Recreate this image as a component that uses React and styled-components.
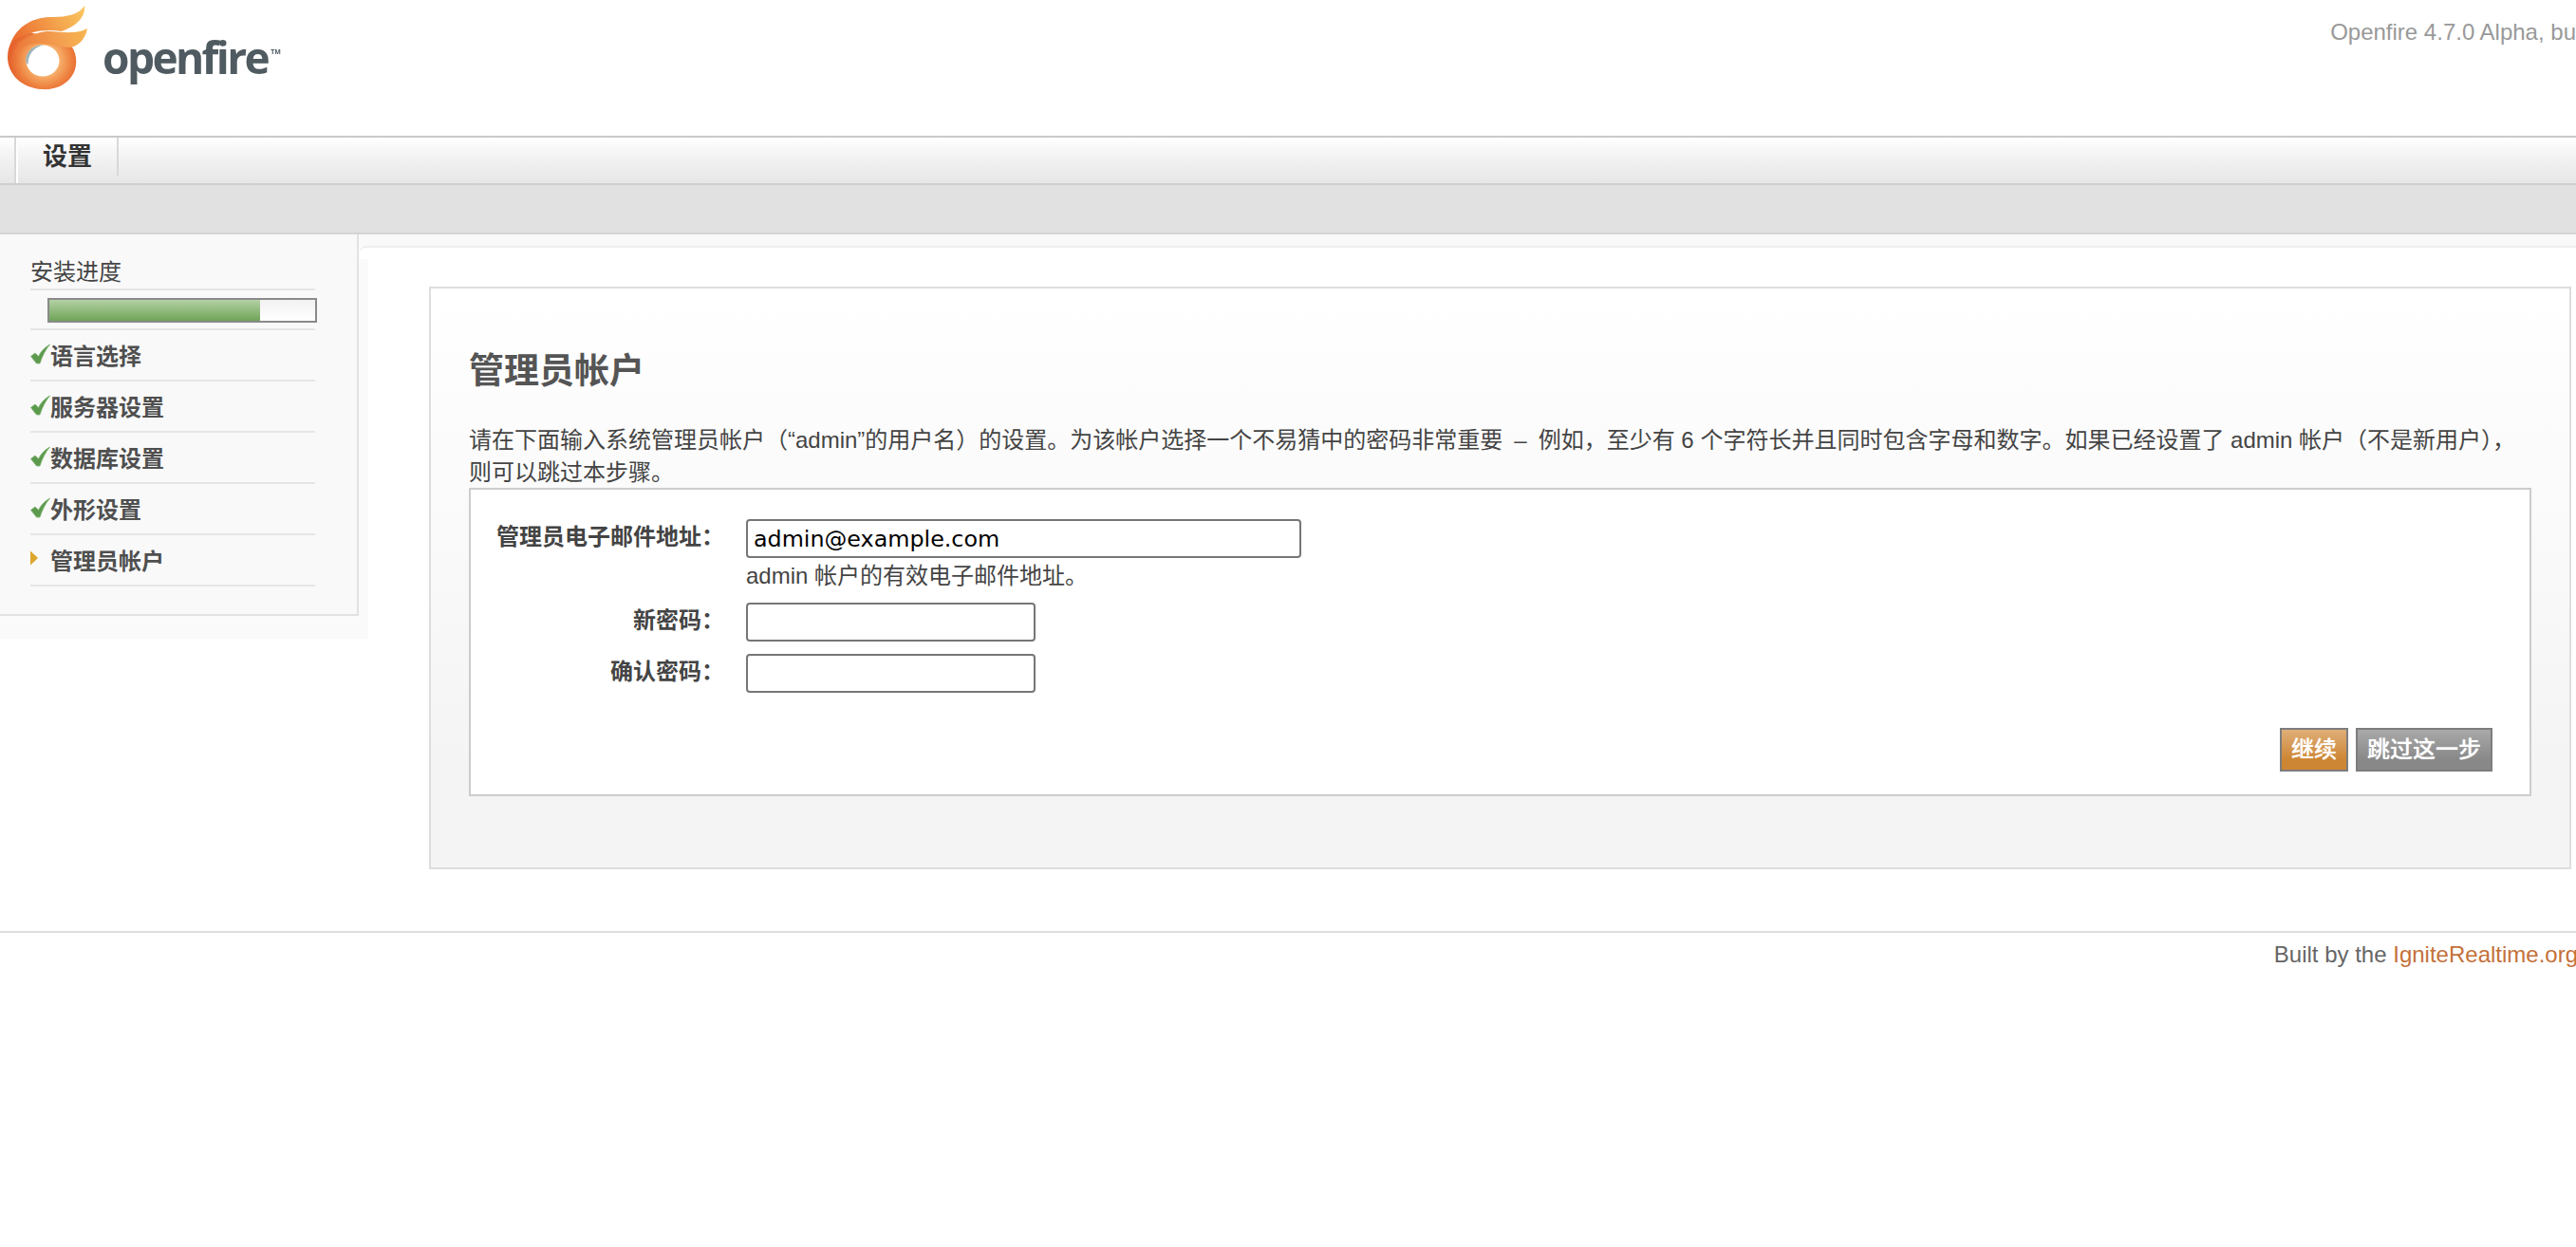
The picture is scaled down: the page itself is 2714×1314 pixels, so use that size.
import React from "react";
import styled, { createGlobalStyle } from "styled-components";

const steps = ["语言选择", "服务器设置", "数据库设置", "外形设置"];

const App = () => {
  return (
    <Page>
      <GlobalStyle />
      <Header>
        <Logo>
          <Flame />
          <Wordmark>
            openfire<Tm>TM</Tm>
          </Wordmark>
        </Logo>
        <Version>Openfire 4.7.0 Alpha, bu</Version>
      </Header>
      <Nav>
        <Tab>设置</Tab>
      </Nav>
      <SubNav />
      <Body>
        <Sidebar>
          <SideTitle>安装进度</SideTitle>
          <ProgressRow>
            <Progress>
              <ProgressFill style={{ width: `${(222 / 280) * 100}%` }} />
            </Progress>
          </ProgressRow>
          {steps.map(step => (
            <Step key={step}>
              <Check />
              {step}
            </Step>
          ))}
          <Step>
            <Arrow />
            管理员帐户
          </Step>
        </Sidebar>
        <Main>
          <Box>
            <Title>管理员帐户</Title>
            <Intro>
              请在下面输入系统管理员帐户（“admin”的用户名）的设置。为该帐户选择一个不易猜中的密码非常重要 <Dash>–</Dash> 例如，至少有 6
              个字符长并且同时包含字母和数字。如果已经设置了 admin 帐户（不是新用户），则可以跳过本步骤。
            </Intro>
            <FormBox>
              <FormRow>
                <Label>管理员电子邮件地址：</Label>
                <div>
                  <Input $wide defaultValue="admin@example.com" />
                  <Help>admin 帐户的有效电子邮件地址。</Help>
                </div>
              </FormRow>
              <FormRow>
                <Label>新密码：</Label>
                <Input type="password" />
              </FormRow>
              <FormRow>
                <Label>确认密码：</Label>
                <Input type="password" />
              </FormRow>
              <Buttons>
                <Button $primary>继续</Button>
                <Button>跳过这一步</Button>
              </Buttons>
            </FormBox>
          </Box>
        </Main>
      </Body>
      <Footer>
        Built by the <FooterLink>IgniteRealtime.org</FooterLink>
      </Footer>
    </Page>
  );
};

const Flame = () => (
  <FlameSvg viewBox="0 0 100 100" width="100" height="100">
    <defs>
      <radialGradient id="ring" gradientUnits="userSpaceOnUse" cx="47" cy="64" r="37">
        <stop offset="0.45" stopColor="#f6ad68" />
        <stop offset="0.75" stopColor="#ee8240" />
        <stop offset="1" stopColor="#e5622c" />
      </radialGradient>
      <linearGradient id="tip" gradientUnits="userSpaceOnUse" x1="15" y1="45" x2="89" y2="8">
        <stop offset="0" stopColor="#ea6a2e" />
        <stop offset="0.5" stopColor="#f29a48" />
        <stop offset="1" stopColor="#f9c860" />
      </linearGradient>
      <linearGradient id="tip2" gradientUnits="userSpaceOnUse" x1="18" y1="50" x2="92" y2="30">
        <stop offset="0" stopColor="#ec7a3a" />
        <stop offset="0.6" stopColor="#f3a050" />
        <stop offset="1" stopColor="#f7b650" />
      </linearGradient>
    </defs>
    <path
      d="M8 60 C8 46 16 36 26 32 L75 48 C82 58 82 72 75 81 C68 91 56 95 44 94 C24 93 8 79 8 60 Z"
      fill="url(#ring)"
    />
    <path
      d="M11 46 C18 26 38 17 56 18 C70 18 84 15 89 6 C90 16 84 26 65 33 C45 30 24 34 11 46 Z"
      fill="url(#tip)"
    />
    <path
      d="M14 58 C20 42 36 33 52 33 C66 34 82 36 92 30 C90 41 84 47 75 50 C62 50 50 45 38 46 C28 47 20 50 14 58 Z"
      fill="url(#tip2)"
    />
    <ellipse cx="45" cy="64" rx="17.5" ry="16.5" fill="#fff" />
    <path d="M27.5 66 C26 55 35 47 46 47.4 C38 49 29.5 55 29.5 68 Z" fill="#9db4b8" />
  </FlameSvg>
);

const Check = () => (
  <StepIcon viewBox="0 0 21 22" width="21" height="22">
    <path
      d="M0.5 13.5 L5 10 L8.5 13.5 C11 8.5 15 4 20.5 1 C16 6.5 12.5 13 10 21 L6.5 21 Z"
      fill="#5c9a4e"
      stroke="#7cb26e"
      strokeWidth="0.8"
      strokeLinejoin="round"
    />
  </StepIcon>
);

const Arrow = () => (
  <StepIcon viewBox="0 0 21 22" width="21" height="22">
    <path d="M0 2.5 L8 10 L0 17.5 Z" fill="#dca62c" />
  </StepIcon>
);

const GlobalStyle = createGlobalStyle`
  html, body {
    margin: 0;
    padding: 0;
    background: #fff;
  }
  body {
    font-family: "Liberation Sans", "Noto Sans CJK SC", sans-serif;
  }
`;

const Page = styled.div`
  width: 2714px;
  min-height: 1314px;
  overflow: hidden;
  color: #444;
  font-size: 24px;
`;

const Header = styled.div`
  height: 143px;
  display: flex;
  justify-content: space-between;
  align-items: flex-start;
`;

const Logo = styled.div`
  display: flex;
  align-items: flex-start;
`;

const FlameSvg = styled.svg`
  display: block;
  filter: blur(0.5px);
`;

const Wordmark = styled.div`
  font-family: "Open Sans", sans-serif;
  font-weight: 700;
  font-size: 46px;
  line-height: 60px;
  letter-spacing: -2.6px;
  color: #4f5b60;
  margin: 30px 0 0 8px;
  display: flex;
  filter: blur(0.5px);
`;

const Tm = styled.span`
  font-size: 7px;
  line-height: 10px;
  margin: 20px 0 0 3px;
  letter-spacing: 0;
  font-weight: 700;
`;

const Version = styled.div`
  color: #999;
  line-height: 28px;
  margin-top: 20px;
  white-space: nowrap;
`;

const Nav = styled.div`
  height: 52px;
  box-sizing: border-box;
  border-top: 2px solid #c9c9c9;
  border-bottom: 2px solid #cfcfcf;
  background: linear-gradient(#fff, #f6f6f6 30%, #e6e6e6);
  padding-left: 15px;
  display: flex;
  align-items: flex-start;
`;

const Tab = styled.div`
  position: relative;
  width: 110px;
  height: 48px;
  box-sizing: border-box;
  text-align: center;
  font-size: 26px;
  font-weight: 700;
  line-height: 41px;
  color: #333;
  border-left: 2px solid #d8d8d8;
  box-shadow: 2px 0 0 #fff inset;

  &::after {
    content: "";
    position: absolute;
    top: 0;
    right: 0;
    width: 2px;
    height: 40px;
    background: #d8d8d8;
  }
`;

const SubNav = styled.div`
  height: 52px;
  box-sizing: border-box;
  background: #e1e1e1;
  border-bottom: 2px solid #d4d4d4;
`;

const Body = styled.div`
  display: flex;
  align-items: flex-start;
  background: linear-gradient(#f9f9f9 13px, #fff 13px);
`;

const Sidebar = styled.div`
  width: 378px;
  height: 402px;
  box-sizing: border-box;
  flex-shrink: 0;
  padding: 0 44px 0 32px;
  background: #f9f9f9;
  border-right: 2px solid #e2e2e2;
  border-bottom: 2px solid #e2e2e2;
  box-shadow: 10px 24px 0 #fafafa, 0 24px 0 #fafafa;
`;

const SideTitle = styled.div`
  height: 59px;
  box-sizing: border-box;
  padding-top: 22px;
  line-height: 36px;
  border-bottom: 2px solid #e6e6e6;
  color: #444;
`;

const ProgressRow = styled.div`
  height: 42px;
  box-sizing: border-box;
  padding: 8px 0 0 18px;
  border-bottom: 2px solid #e6e6e6;
`;

const Progress = styled.div`
  width: 284px;
  height: 26px;
  box-sizing: border-box;
  border: 2px solid #8a8a8a;
  background: linear-gradient(#f2f2f2, #fff);
`;

const ProgressFill = styled.div`
  height: 100%;
  background: linear-gradient(#b4d1a4, #6fa458);
`;

const Step = styled.div`
  height: 54px;
  box-sizing: border-box;
  display: flex;
  align-items: center;
  padding-bottom: 2px;
  font-weight: 700;
  color: #4f4f4f;
  border-bottom: 2px solid #e6e6e6;
`;

const StepIcon = styled.svg`
  flex-shrink: 0;
  filter: blur(0.4px);
`;

const Main = styled.div`
  flex: 1;
  min-width: 0;
  margin-top: 12px;
  padding: 41px 5px 0 74px;
  border-top: 2px solid #eee;
  border-top-left-radius: 8px;
  background: linear-gradient(#fff 12px, transparent 12px);
`;

const Box = styled.div`
  box-sizing: border-box;
  height: 614px;
  padding: 0 40px;
  border: 2px solid #ddd;
  background: linear-gradient(#fff, #f4f4f4 85%);
`;

const Title = styled.h1`
  margin: 0;
  padding-top: 63px;
  font-size: 37px;
  line-height: 50px;
  font-weight: 700;
  color: #555;
`;

const Intro = styled.p`
  margin: 0;
  padding-top: 30px;
  line-height: 33.5px;
  color: #444;
`;

const Dash = styled.span`
  display: inline-block;
  width: 24px;
  text-align: center;
`;

const FormBox = styled.div`
  box-sizing: border-box;
  height: 325px;
  padding: 31px 39px 0 0;
  background: #fff;
  border: 2px solid #ccc;
`;

const FormRow = styled.div`
  display: grid;
  grid-template-columns: 267px auto;
  column-gap: 23px;
  justify-content: start;
  align-items: start;
  margin-bottom: 13px;
`;

const Label = styled.div`
  text-align: right;
  font-weight: 700;
  line-height: 37px;
  color: #444;
`;

const Input = styled.input`
  display: block;
  box-sizing: border-box;
  width: ${p => (p.$wide ? "585px" : "305px")};
  height: 41px;
  padding: 0 6px;
  margin: 0;
  border: 2px solid #767676;
  border-radius: 4px;
  background: #fff;
  color: #000;
  font-family: "DejaVu Sans", sans-serif;
  font-size: 23.8px;
`;

const Help = styled.div`
  line-height: 38px;
  margin-bottom: -4px;
  color: #444;
`;

const Buttons = styled.div`
  display: flex;
  justify-content: flex-end;
  gap: 8px;
  margin-top: 37px;
`;

const Button = styled.div`
  height: 46px;
  box-sizing: border-box;
  padding: 0 10px;
  line-height: 42px;
  color: #fff;
  font-weight: 500;
  text-shadow: 0 0 1px rgba(255, 255, 255, 0.7);
  border: 2px solid #7d7d7d;
  background: ${p =>
    p.$primary
      ? "linear-gradient(#dfae78, #cd8633 75%)"
      : "linear-gradient(#a9a9a9, #888 75%)"};
`;

const Footer = styled.div`
  margin: 65px -2px 0 0;
  border-top: 2px solid #ddd;
  padding-top: 9px;
  line-height: 28px;
  text-align: right;
  color: #666;
  white-space: nowrap;
`;

const FooterLink = styled.span`
  color: #c4713a;
`;

export default App;
